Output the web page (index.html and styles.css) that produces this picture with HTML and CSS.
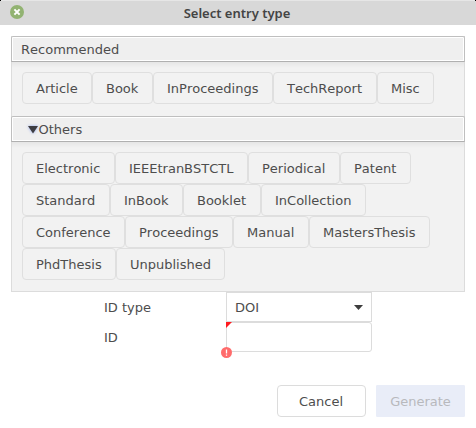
FILE: index.html
```html
<!DOCTYPE html>
<html lang="en">
<head>
<meta charset="utf-8">
<title>Select entry type</title>
<link rel="stylesheet" href="styles.css">
</head>
<body>
<header class="titlebar">
  <svg class="close" width="14" height="14" viewBox="0 0 14 14"><circle cx="7" cy="7" r="7" fill="#92b372"/><path d="M4.4 4.4 9.6 9.6M9.6 4.4 4.4 9.6" stroke="#fff" stroke-width="2"/></svg>
  <h1 class="title">Select entry type</h1>
</header>
<main class="content">
  <section class="pane">
    <h2 class="pane-head">Recommended</h2>
    <div class="pane-body">
      <div class="row recommended"><button>Article</button><button>Book</button><button>InProceedings</button><button>TechReport</button><button>Misc</button></div>
    </div>
  </section>
  <section class="pane others">
    <h2 class="pane-head"><svg class="arrow" width="12" height="9" viewBox="0 0 12 9"><path d="M1 1h10L6 8.5z" fill="#3d3d41"/></svg>Others</h2>
    <div class="pane-body">
      <div class="row online"><button>Electronic</button><button>IEEEtranBSTCTL</button><button>Periodical</button><button>Patent</button></div>
      <div class="row books"><button>Standard</button><button>InBook</button><button>Booklet</button><button>InCollection</button></div>
      <div class="row events"><button>Conference</button><button>Proceedings</button><button>Manual</button><button>MastersThesis</button></div>
      <div class="row theses"><button>PhdThesis</button><button>Unpublished</button></div>
    </div>
  </section>
  <div class="form">
    <label>ID type</label>
    <div class="combo"><span>DOI</span><svg width="9" height="5" viewBox="0 0 9 5"><path d="M0 0h9L4.5 5z" fill="#3d3d3d"/></svg></div>
    <label for="id">ID</label>
    <div class="field"><input id="id" type="text">
      <svg class="required" width="6" height="6" viewBox="0 0 6 6"><path d="M0 0h6L0 6z" fill="#ff1a1f"/></svg>
      <svg class="error" width="11" height="11" viewBox="0 0 11 11"><circle cx="5.5" cy="5.5" r="5.5" fill="#ff6b6b"/><path d="M5.5 2.4v4M5.5 7.4v1.3" stroke="#fff" stroke-width="1.3"/></svg>
    </div>
  </div>
  <footer class="actions"><button class="cancel">Cancel</button><button class="generate" disabled>Generate</button></footer>
</main>
</body>
</html>
```
FILE: styles.css
```css
* { box-sizing: border-box; }
body {
  margin: 0;
  height: 428px;
  overflow: hidden;
  background: #fff;
  color: #4d4d4d;
  font: 13px/16px "DejaVu Sans", sans-serif;
  font-kerning: none;
}
h1, h2 { margin: 0; font-size: 13px; font-weight: normal; }
button, input { font: inherit; font-kerning: none; color: inherit; outline: 0; }
.titlebar {
  display: flex;
  align-items: center;
  height: 25px;
  padding: 1px 10px 0;
  background:
    linear-gradient(#000, #000) 0 0 / 1px 1px no-repeat,
    linear-gradient(#000, #000) 100% 0 / 1px 1px no-repeat,
    linear-gradient(#e6e6e6, #e6e6e6) 0 0 / 100% 1px no-repeat,
    #d8d8d8;
}
.close { flex: none; margin-top: -2px; }
.title {
  flex: 1;
  padding-right: 16px;
  text-align: center;
  color: #444;
  font: 600 13px/18px "Noto Sans", sans-serif;
}
.content { padding: 11px 11px 0; }
.pane {
  height: 80px;
  border: solid #dcdcdc;
  border-width: 0 1px;
  background: #f2f2f2;
}
.others { height: 176px; border-bottom-width: 1px; }
.pane-head {
  display: flex;
  align-items: center;
  height: 26px;
  margin: 0 -1px;
  padding: 2px 8px 0 9px;
  border: 1px solid #bfbfbf;
  border-bottom-color: #b0b0b0;
  border-radius: 2px 2px 0 0;
  background: #efefef;
  box-shadow: inset 0 0 0 1px #fff;
}
.arrow { margin: -2px -0.5px 0 6px; filter: drop-shadow(0 0 1.5px #91a8ee); }
.pane-body {
  height: 54px;
  padding: 10px;
  background: linear-gradient(#e6e6e6, #f2f2f2 6px);
}
.others .pane-body { height: 149px; }
.row { display: grid; }
.recommended { grid-template-columns: 70px 61px 120px 104px 57px; }
.online { grid-template-columns: 93px 133px 92px 71px; }
.books { grid-template-columns: 88px 73px 78px 105px; }
.events { grid-template-columns: 103px 108px 76px 121px; }
.theses { grid-template-columns: 94px 109px; }
.row button {
  height: 32px;
  padding: 2px 0 0 13px;
  border: 1px solid #dfdfdf;
  border-radius: 4px;
  background: #f2f2f2;
  text-align: left;
  white-space: nowrap;
}
.form {
  display: grid;
  grid-template-columns: 122px 146px;
  grid-auto-rows: 30px;
  align-items: center;
  margin-left: 93px;
}
.form label, .combo span { padding-top: 2px; }
.combo {
  display: flex;
  align-items: center;
  justify-content: space-between;
  height: 30px;
  padding: 0 8px;
  border: 1px solid #dcdcdc;
}
.field { position: relative; height: 30px; }
.field input {
  display: block;
  width: 146px;
  height: 30px;
  border: 1px solid #dcdcdc;
  border-radius: 3px;
  background: #fff;
}
.required { position: absolute; left: 0; top: 0; }
.error { position: absolute; left: -5px; bottom: -6px; }
.actions {
  display: flex;
  justify-content: flex-end;
  gap: 10px;
  margin-top: 33px;
}
.actions button {
  width: 89px;
  height: 32px;
  padding: 2px 0 0;
  border: 1px solid #dcdcdc;
  border-radius: 4px;
  background: #fff;
}
.actions .cancel { padding-right: 1px; }
.actions .generate {
  border-color: #e9edf8;
  border-radius: 1px;
  background: #e9edf8;
  color: #b8b9bd;
}
```
